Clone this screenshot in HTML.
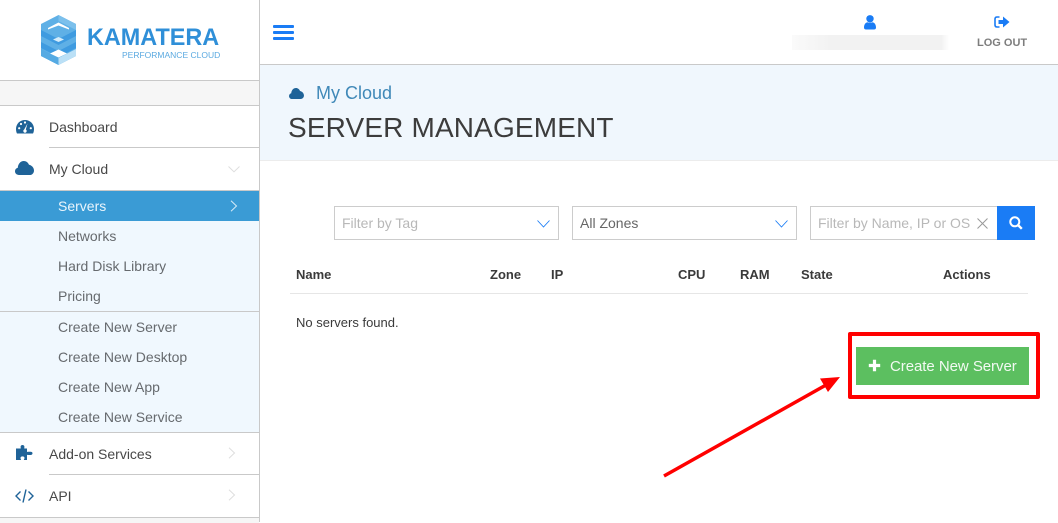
<!DOCTYPE html>
<html><head><meta charset="utf-8">
<style>
html,body{margin:0;padding:0;width:1058px;height:522px;overflow:hidden;background:#fff;font-family:"Liberation Sans",sans-serif}
.a{position:absolute;white-space:nowrap}
.l{position:absolute;height:1px;background:#c9c9c9}
.m{font-size:14px;line-height:20px;color:#484848;left:49px}
.s{font-size:14px;line-height:20px;color:#666a6e;left:58px}
.h{font-size:13px;line-height:16px;font-weight:bold;color:#3a3a3a;top:267px}
.box{position:absolute;top:206px;height:32px;border:1px solid #ccc;background:#fff;font-size:14px;line-height:33px;padding-left:7px;box-sizing:content-box}
svg{position:absolute;overflow:visible}
</style></head><body>

<!-- sidebar -->
<div class="a" style="left:259px;top:0;width:1px;height:522px;background:#c9c9c9"></div>
<div class="a" style="left:0;top:80px;width:259px;background:#f6f6f6;border-top:1px solid #c9c9c9;border-bottom:1px solid #c9c9c9;box-sizing:content-box;height:24px"></div>

<!-- logo -->
<svg style="left:41px;top:15px" width="35" height="50" viewBox="0 0 35 50">
<path d="M0 9L17.500 0L35 9V41L17.500 50L0 41Z" fill="#5fb0e6"/>
<path d="M17.500 0L35 9V15L17.500 6Z" fill="#7cc0ec"/>
<path d="M0 15L17.500 24L35 15V21L17.500 30L0 21Z" fill="#3f9be0"/>
<path d="M0 27L17.500 36L35 27V33L17.500 42L0 33Z" fill="#3f9be0"/>
<path d="M7 13L17.500 7.500L28 13V14.500L17.500 10.500L7 14.500Z" fill="#fff"/>
<path d="M12 24.500L17.500 22L23 24.500L17.500 27Z" fill="#d5ecfa"/>
<path d="M9 38.500L17.500 34.500L26 38.500L17.500 42.500Z" fill="#fff"/>
<path d="M35 34V41L17.500 50V43Z" fill="#bbe0f6"/>
<path d="M0 34V41L17.500 50V43Z" fill="#55aae3"/>
</svg>
<div class="a" style="left:87px;top:23px;font-size:24px;line-height:30px;font-weight:bold;color:#2f8fd8;transform-origin:0 0;transform:scaleX(.975)">KAMATERA</div>
<div class="a" style="left:122px;top:49px;font-size:8.500px;line-height:12px;color:#5aa9e0">PERFORMANCE CLOUD</div>

<!-- Dashboard -->
<svg style="left:16px;top:120px" width="18" height="14" viewBox="0 0 18 14"><path d="M9 0C3.800 0 0 4 0 9C0 10.800.4 12.400 1 13.500H17C17.600 12.400 18 10.800 18 9C18 4 14.200 0 9 0Z" fill="#1f6398"/><circle cx="3.200" cy="8.200" r="1.100" fill="#fff"/><circle cx="5" cy="4" r="1.100" fill="#fff"/><circle cx="9" cy="2.500" r="1.100" fill="#fff"/><circle cx="14.800" cy="8.200" r="1.100" fill="#fff"/><path d="M11.500 3.500L9.800 9.500A1.700 1.700 0 1 1 8.200 9.500Z" fill="#fff"/></svg>
<div class="a m" style="top:117px">Dashboard</div>
<div class="l" style="left:49px;top:147px;width:210px"></div>

<!-- My Cloud -->
<svg style="left:15px;top:161px" width="19" height="14" viewBox="0 0 19 14"><path d="M4 14C1.700 14 0 12.500 0 10.300C0 8.500 1.100 7.100 2.800 6.700C3 3 5.500 0 8.800 0C11.200 0 13.100 1.500 14 3.800C16.800 4.300 19 6.800 19 9.600C19 12.200 17 14 14.800 14Z" fill="#1f6398"/></svg>
<div class="a m" style="top:159px">My Cloud</div>
<svg style="left:228px;top:166px" width="12" height="7" viewBox="0 0 12 7"><path d="M.5.500L6 5.800L11.500.500" fill="none" stroke="#dedede" stroke-width="1"/></svg>
<div class="l" style="left:0;top:190px;width:259px"></div>

<!-- submenu -->
<div class="a" style="left:0;top:191px;width:259px;height:241px;background:#f0f8fe"></div>
<div class="a" style="left:0;top:191px;width:259px;height:30px;background:#3a9bd5"></div>
<div class="a s" style="top:196px;color:#eaf5fc">Servers</div>
<svg style="left:230px;top:200px" width="8" height="12" viewBox="0 0 8 12"><path d="M1 .800L6.500 6L1 11.200" fill="none" stroke="#d7ecf8" stroke-width="1"/></svg>
<div class="a s" style="top:226px">Networks</div>
<div class="a s" style="top:256px">Hard Disk Library</div>
<div class="a s" style="top:286px">Pricing</div>
<div class="l" style="left:0;top:311px;width:259px"></div>
<div class="a s" style="top:317px">Create New Server</div>
<div class="a s" style="top:347px">Create New Desktop</div>
<div class="a s" style="top:377px">Create New App</div>
<div class="a s" style="top:407px">Create New Service</div>
<div class="l" style="left:0;top:432px;width:259px"></div>

<!-- Add-on -->
<svg style="left:16px;top:445px" width="17" height="15" viewBox="0 0 17 15"><path d="M0 3.500H4.500C5 3.500 4.600 2.800 4.600 1.800C4.600.700 5.400 0 6.500 0C7.600 0 8.400.700 8.400 1.800C8.400 2.800 8 3.500 8.500 3.500H11V6.700C11 7.200 11.800 6.600 12.600 6.700H14.500C15.800 6.700 16.500 7.300 16.500 8.300C16.500 9.300 15.800 10 14.500 10H12.500C11.800 10 11 9.700 11 10.200V15H8C7.500 15 8.500 13.800 8.500 13C8.500 12 7.600 11.400 6.500 11.400C5.400 11.400 4.500 12 4.500 13C4.500 13.800 5.300 15 5 15H0Z" fill="#1f6398"/></svg>
<div class="a m" style="top:444px">Add-on Services</div>
<svg style="left:228px;top:447px" width="8" height="12" viewBox="0 0 8 12"><path d="M1 .800L6.500 6L1 11.200" fill="none" stroke="#dedede" stroke-width="1"/></svg>
<div class="l" style="left:49px;top:474px;width:210px"></div>

<!-- API -->
<svg style="left:15px;top:489px" width="19" height="14" viewBox="0 0 19 14"><path d="M5.500 2.500L1 7L5.500 11.500M13.500 2.500L18 7L13.500 11.500M11 .500L8 13.500" fill="none" stroke="#1f6398" stroke-width="1.400"/></svg>
<div class="a m" style="top:486px">API</div>
<svg style="left:228px;top:489px" width="8" height="12" viewBox="0 0 8 12"><path d="M1 .800L6.500 6L1 11.200" fill="none" stroke="#dedede" stroke-width="1"/></svg>
<div class="a" style="left:0;top:517px;width:259px;height:5px;background:#f6f6f6;border-top:1px solid #c9c9c9"></div>

<!-- header -->
<div class="a" style="left:273px;top:25px;width:21px;height:3px;background:#1a7cf5;border-radius:1px"></div>
<div class="a" style="left:273px;top:31px;width:21px;height:3px;background:#1a7cf5;border-radius:1px"></div>
<div class="a" style="left:273px;top:37px;width:21px;height:3px;background:#1a7cf5;border-radius:1px"></div>
<svg style="left:864px;top:15px" width="12" height="15" viewBox="0 0 12 15"><circle cx="6" cy="3.800" r="3.700" fill="#1a7cf5"/><path d="M0 12.500C0 9.500 1.500 7.500 3.500 7.200C4.800 8 7.200 8 8.500 7.200C10.500 7.500 12 9.500 12 12.500C12 14 11 14.500 10 14.500H2C1 14.500 0 14 0 12.500Z" fill="#1a7cf5"/></svg>
<div class="a" style="left:792px;top:35px;width:157px;height:15px;background:linear-gradient(90deg,#fafafa 0,#f2f2f2 25%,#f2f2f2 95%,#fff 100%)"></div>
<svg style="left:994px;top:15px" width="16" height="14" viewBox="0 0 16 14"><path d="M5.500 2H3C1.800 2 1 2.800 1 4V10C1 11.200 1.800 12 3 12H5.500" fill="none" stroke="#1a7cf5" stroke-width="1.600"/><path d="M4.500 5H9V1.500L15.500 7L9 12.500V9H4.500Z" fill="#1a7cf5"/></svg>
<div class="a" style="left:977px;top:37px;font-size:11px;line-height:13px;font-weight:bold;color:#7d7d7d">LOG OUT</div>
<div class="l" style="left:260px;top:64px;width:798px"></div>

<!-- banner -->
<div class="a" style="left:260px;top:65px;width:798px;height:95px;background:#f0f7fd;border-bottom:1px solid #ececec"></div>
<svg style="left:289px;top:88px" width="15" height="11" viewBox="0 0 19 14"><path d="M4 14C1.700 14 0 12.500 0 10.300C0 8.500 1.100 7.100 2.800 6.700C3 3 5.500 0 8.800 0C11.200 0 13.100 1.500 14 3.800C16.800 4.300 19 6.800 19 9.600C19 12.200 17 14 14.800 14Z" fill="#1f6398"/></svg>
<div class="a" style="left:316px;top:81px;font-size:18px;line-height:24px;color:#4089b8">My Cloud</div>
<div class="a" style="left:288px;top:111px;font-size:28px;line-height:34px;color:#3c3c3c;letter-spacing:.15px">SERVER MANAGEMENT</div>

<!-- filters -->
<div class="box" style="left:334px;width:216px;color:#b8b8b8">Filter by Tag</div>
<svg style="left:537px;top:220px" width="13" height="8" viewBox="0 0 13 8"><path d="M.5.500L6.500 7L12.500.500" fill="none" stroke="#1a7cf5" stroke-width=".9"/></svg>
<div class="box" style="left:572px;width:216px;color:#666">All Zones</div>
<svg style="left:775px;top:220px" width="13" height="8" viewBox="0 0 13 8"><path d="M.5.500L6.500 7L12.500.500" fill="none" stroke="#1a7cf5" stroke-width=".9"/></svg>
<div class="box" style="left:810px;width:179px;color:#b8b8b8;border-right:0">Filter by Name, IP or OS</div>
<svg style="left:977px;top:218px" width="11" height="11" viewBox="0 0 11 11"><path d="M.5.500L10.500 10.500M10.500.500L.5 10.500" stroke="#999" stroke-width="1" fill="none"/></svg>
<div class="a" style="left:997px;top:206px;width:38px;height:34px;background:#1a7cf5"></div>
<svg style="left:1009px;top:216px" width="14" height="14" viewBox="0 0 14 14"><circle cx="5.800" cy="5.800" r="4.500" fill="none" stroke="#fff" stroke-width="2"/><path d="M9 9L12.800 12.800" stroke="#fff" stroke-width="2.400"/></svg>

<!-- table -->
<div class="a h" style="left:296px">Name</div>
<div class="a h" style="left:490px">Zone</div>
<div class="a h" style="left:551px">IP</div>
<div class="a h" style="left:678px">CPU</div>
<div class="a h" style="left:740px">RAM</div>
<div class="a h" style="left:801px">State</div>
<div class="a h" style="left:943px">Actions</div>
<div class="a" style="left:290px;top:293px;width:738px;height:1px;background:#e6e6e6"></div>
<div class="a" style="left:296px;top:315px;font-size:13px;line-height:16px;color:#3a3a3a">No servers found.</div>

<!-- button -->
<div class="a" style="left:856px;top:347px;width:173px;height:38px;background:#5cbf60"></div>
<svg style="left:868px;top:359px" width="13" height="13" viewBox="0 0 13 13"><path d="M6.500 .8V12.200M.8 6.500H12.200" stroke="#fff" stroke-width="3.200"/></svg>
<div class="a" style="left:890px;top:357px;font-size:15px;line-height:20px;color:#f2faf2;letter-spacing:-.05px">Create New Server</div>

<!-- annotation -->
<div class="a" style="left:848px;top:332px;width:192px;height:67px;border:4px solid #f00;border-radius:2px;box-sizing:border-box"></div>
<svg style="left:0;top:0" width="1058" height="522" viewBox="0 0 1058 522"><path d="M664 476L826 385" stroke="#f00" stroke-width="3.500" fill="none"/><path d="M840 377L820 378.500L828 392Z" fill="#f00"/></svg>

</body></html>
